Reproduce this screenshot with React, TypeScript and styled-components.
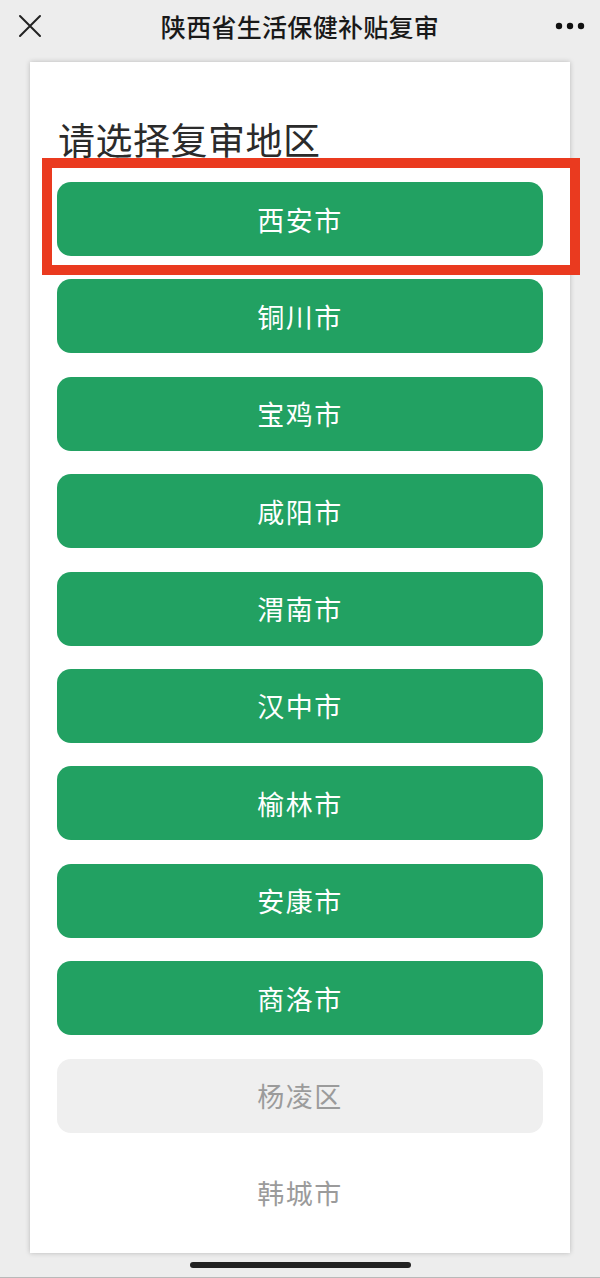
import * as React from 'react';
import styled, { createGlobalStyle } from 'styled-components';

const GlobalStyle = createGlobalStyle`
  html, body {
    margin: 0;
    padding: 0;
    background: #ededed;
  }
  body {
    font-family: "Noto Sans CJK SC", "Noto Sans", sans-serif;
  }
`;

const regions = [
  { name: '西安市', state: 'active' },
  { name: '铜川市', state: 'active' },
  { name: '宝鸡市', state: 'active' },
  { name: '咸阳市', state: 'active' },
  { name: '渭南市', state: 'active' },
  { name: '汉中市', state: 'active' },
  { name: '榆林市', state: 'active' },
  { name: '安康市', state: 'active' },
  { name: '商洛市', state: 'active' },
  { name: '杨凌区', state: 'disabled' },
  { name: '韩城市', state: 'plain' }
] as const;

type ButtonState = 'active' | 'disabled' | 'plain';

const Page = styled.div`
  height: 1278px;
  display: flex;
  flex-direction: column;
  background: #ededed;
  overflow: hidden;
`;

const NavBar = styled.header`
  height: 62px;
  flex-shrink: 0;
  display: grid;
  grid-template-columns: 60px 1fr 60px;
  align-items: center;
  padding-bottom: 10px;
  box-sizing: border-box;
`;

const NavButton = styled.button`
  border: none;
  background: none;
  padding: 0;
  height: 40px;
  display: flex;
  align-items: center;
  justify-content: center;
  cursor: pointer;
`;

const NavTitle = styled.h1`
  margin: 0;
  text-align: center;
  font-size: 25px;
  font-weight: 500;
  color: #191919;
  letter-spacing: 0.3px;
`;

const Card = styled.main`
  flex: 1;
  margin: 0 30px;
  background: #fff;
  box-shadow: 0 0 5px rgba(0, 0, 0, 0.22);
  padding: 55px 27px 0;
  box-sizing: border-box;
`;

const Heading = styled.h2`
  margin: 0 0 20px 1px;
  font-size: 37px;
  line-height: 45px;
  font-weight: 400;
  color: #2b2b2b;
  letter-spacing: 0.5px;
`;

const List = styled.div`
  display: flex;
  flex-direction: column;
  gap: 23.4px;
`;

const Highlight = styled.div`
  position: relative;

  &::after {
    content: '';
    position: absolute;
    top: -24px;
    left: -15px;
    right: -37px;
    bottom: -19px;
    border: 10px solid #ea3a1f;
    pointer-events: none;
  }
`;

const RegionButton = styled.button<{ $state: ButtonState }>`
  width: 100%;
  height: 74px;
  border: none;
  border-radius: 14px;
  font-family: inherit;
  font-size: 27px;
  letter-spacing: 1.5px;
  display: flex;
  align-items: center;
  justify-content: center;
  cursor: pointer;
  background: ${p =>
    p.$state === 'active' ? '#22a162' : p.$state === 'disabled' ? '#efefef' : '#ffffff'};
  color: ${p => (p.$state === 'active' ? '#ffffff' : '#9b9b9b')};
`;

const BottomBar = styled.footer`
  height: 25px;
  flex-shrink: 0;
  display: flex;
  justify-content: center;
  align-items: flex-start;
  padding-top: 9px;
  box-sizing: border-box;
  border-bottom: 1px solid #b9b9b9;
`;

const HomeIndicator = styled.div`
  width: 221px;
  height: 6px;
  border-radius: 3px;
  background: #222;
`;

const CloseIcon = () => (
  <svg width="24" height="24" viewBox="0 0 24 24">
    <path d="M2 2 L22 22 M22 2 L2 22" stroke="#222" strokeWidth="2" strokeLinecap="round" />
  </svg>
);

const MoreIcon = () => (
  <svg width="30" height="8" viewBox="0 0 30 8">
    <circle cx="4" cy="4" r="3.2" fill="#111" />
    <circle cx="15" cy="4" r="3.2" fill="#111" />
    <circle cx="26" cy="4" r="3.2" fill="#111" />
  </svg>
);

export default function App() {
  return (
    <>
      <GlobalStyle />
      <Page>
        <NavBar>
          <NavButton aria-label="关闭">
            <CloseIcon />
          </NavButton>
          <NavTitle>陕西省生活保健补贴复审</NavTitle>
          <NavButton aria-label="更多">
            <MoreIcon />
          </NavButton>
        </NavBar>
        <Card>
          <Heading>请选择复审地区</Heading>
          <List>
            {regions.map((r, i) => {
              const btn = (
                <RegionButton key={r.name} $state={r.state} disabled={r.state !== 'active'}>
                  {r.name}
                </RegionButton>
              );
              return i === 0 ? <Highlight key={r.name}>{btn}</Highlight> : btn;
            })}
          </List>
        </Card>
        <BottomBar>
          <HomeIndicator />
        </BottomBar>
      </Page>
    </>
  );
}
